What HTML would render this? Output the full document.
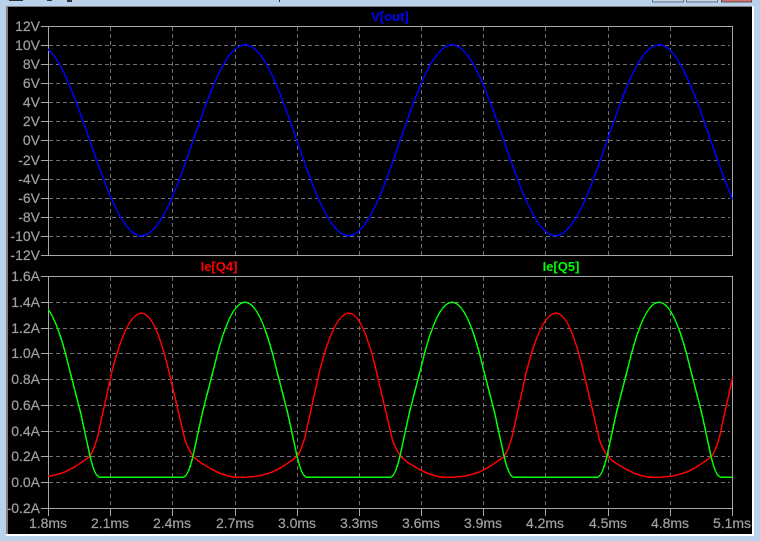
<!DOCTYPE html>
<html>
<head>
<meta charset="utf-8">
<title>V[out]</title>
<style>
html,body{margin:0;padding:0;background:#b9d1ea;width:760px;height:541px;overflow:hidden}
svg{display:block}
text{font-family:"Liberation Sans",Arial,sans-serif;font-size:14px;fill:#a0a0a0;stroke:#a0a0a0;stroke-width:.2px}
.t{font-weight:bold;font-size:13px;stroke:none}
</style>
</head>
<body>
<svg width="760" height="541" viewBox="0 0 760 541" xmlns="http://www.w3.org/2000/svg">
<defs>
<clipPath id="c"><rect x="48" y="20" width="684.5" height="490"/></clipPath>
<path id="gp" d="M-103.5 477.3L-62 477.3Q-57 477.3 -52 456L-42.7 413L-31 367.5Q-15.5 302.3 0 302.3Q15.5 302.3 31 367.5L42.7 413L52 456Q57 477.3 62 477.3L103.5 477.3"/>
<path id="rp" d="M-103.5 477.3L-93 476.3-86 475-77.5 472.3-67.5 467.3-59 461.7-52 456.7Q-47.5 450 -44 437L-30 373.5Q-15 313.2 0 313.2Q13.4 313.2 26.8 369L43.5 440Q47 450 52 456.7L58.5 462.3 68.5 468.3 78.5 473.3 86.8 476 93.5 477.3 103.5 477.3"/>
</defs>

<!-- window background -->
<rect width="760" height="541" fill="#b9d1ea"/>
<!-- title bar remnants -->
<g fill="#333">
<rect x="9" y="0" width="14" height="1"/>
<rect x="47" y="0" width="5" height="1"/>
<rect x="67" y="0" width="5" height="2"/>
<rect x="279" y="0" width="1" height="2"/>
</g>
<g shape-rendering="crispEdges">
<rect x="652.5" y="-3" width="31" height="5" fill="#c5d5e8" stroke="#5f6f85"/>
<rect x="686.5" y="-3" width="31" height="5" fill="#c5d5e8" stroke="#5f6f85"/>
<rect x="721.5" y="-3" width="30" height="5" fill="#d0716a" stroke="#5f4f5f"/>
<!-- frame edges -->
<rect x="752" y="6" width="2" height="530" fill="#ffffff"/>
<rect x="6" y="534" width="748" height="2" fill="#ffffff"/>
<rect x="6" y="6" width="746" height="1" fill="#808080"/>
<rect x="6" y="6" width="2" height="528" fill="#808080"/>
<rect x="8" y="7" width="744" height="527" fill="#000000"/>
</g>

<!-- grid -->
<g stroke="#707070" stroke-width="1" stroke-dasharray="4 3" fill="none" shape-rendering="crispEdges">
<path d="M49 45.5H730M49 64.5H730M49 83.5H730M49 102.5H730M49 121.5H730M49 140.5H730M49 160.5H730M49 179.5H730M49 198.5H730M49 217.5H730M49 236.5H730"/>
<path d="M49 302.5H730M49 328.5H730M49 353.5H730M49 379.5H730M49 405.5H730M49 431.5H730M49 456.5H730M49 482.5H730"/>
<path d="M110.5 27V255M172.5 27V255M235.5 27V255M297.5 27V255M359.5 27V255M421.5 27V255M483.5 27V255M545.5 27V255M608.5 27V255M670.5 27V255"/>
<path d="M110.5 277V508M172.5 277V508M235.5 277V508M297.5 277V508M359.5 277V508M421.5 277V508M483.5 277V508M545.5 277V508M608.5 277V508M670.5 277V508"/>
</g>

<!-- frames and ticks -->
<g stroke="#a8a8a8" stroke-width="1" fill="none" shape-rendering="crispEdges">
<rect x="48.5" y="26.5" width="684" height="229"/>
<rect x="48.5" y="276.5" width="684" height="232"/>
<path d="M41 26.5H48M41 45.5H48M41 64.5H48M41 83.5H48M41 102.5H48M41 121.5H48M41 140.5H48M41 160.5H48M41 179.5H48M41 198.5H48M41 217.5H48M41 236.5H48M41 255.5H48"/>
<path d="M41 276.5H48M41 302.5H48M41 328.5H48M41 353.5H48M41 379.5H48M41 405.5H48M41 431.5H48M41 456.5H48M41 482.5H48M41 508.5H48"/>
<path d="M48.5 509V516M110.5 509V516M172.5 509V516M235.5 509V516M297.5 509V516M359.5 509V516M421.5 509V516M483.5 509V516M545.5 509V516M608.5 509V516M670.5 509V516M732.5 509V516"/>
</g>

<!-- traces -->
<g clip-path="url(#c)" fill="none" stroke-width="1.5" stroke-linejoin="round" shape-rendering="crispEdges">
<path stroke="#0000ff" d="M38 44.8c18.73 0 34.87 46.6 51.75 95.5c16.88 48.9 33.02 95.5 51.75 95.5c18.73 0 34.87 -46.6 51.75 -95.5c16.88 -48.9 33.02 -95.5 51.75 -95.5c18.73 0 34.87 46.6 51.75 95.5c16.88 48.9 33.02 95.5 51.75 95.5c18.73 0 34.87 -46.6 51.75 -95.5c16.88 -48.9 33.02 -95.5 51.75 -95.5c18.73 0 34.87 46.6 51.75 95.5c16.88 48.9 33.02 95.5 51.75 95.5c18.73 0 34.87 -46.6 51.75 -95.5c16.88 -48.9 33.02 -95.5 51.75 -95.5c18.73 0 34.87 46.6 51.75 95.5c16.88 48.9 33.02 95.5 51.75 95.5"/>
<g stroke="#ff0000">
<use href="#rp" transform="translate(141.5 0)"/>
<use href="#rp" transform="translate(349 0)"/>
<use href="#rp" transform="translate(556 0)"/>
<use href="#rp" transform="translate(763.5 0)"/>
</g>
<g stroke="#00ff00">
<use href="#gp" transform="translate(38 0)"/>
<use href="#gp" transform="translate(245 0)"/>
<use href="#gp" transform="translate(452 0)"/>
<use href="#gp" transform="translate(659 0)"/>
</g>
</g>

<!-- titles -->
<text class="t" x="390" y="21" text-anchor="middle" style="fill:#0000ff">V[out]</text>
<text class="t" x="219" y="271" text-anchor="middle" style="fill:#ff0000">Ie[Q4]</text>
<text class="t" x="561" y="271" text-anchor="middle" style="fill:#00ff00">Ie[Q5]</text>

<!-- y labels -->
<g text-anchor="end">
<text x="40" y="31">12V</text>
<text x="40" y="50">10V</text>
<text x="40" y="69">8V</text>
<text x="40" y="88">6V</text>
<text x="40" y="107">4V</text>
<text x="40" y="126">2V</text>
<text x="40" y="145">0V</text>
<text x="40" y="165">-2V</text>
<text x="40" y="184">-4V</text>
<text x="40" y="203">-6V</text>
<text x="40" y="222">-8V</text>
<text x="40" y="241">-10V</text>
<text x="40" y="260">-12V</text>
<text x="40" y="281">1.6A</text>
<text x="40" y="307">1.4A</text>
<text x="40" y="333">1.2A</text>
<text x="40" y="358">1.0A</text>
<text x="40" y="384">0.8A</text>
<text x="40" y="410">0.6A</text>
<text x="40" y="436">0.4A</text>
<text x="40" y="461">0.2A</text>
<text x="40" y="487">0.0A</text>
<text x="40" y="513">-0.2A</text>
</g>

<!-- x labels -->
<g text-anchor="middle">
<text x="48" y="528">1.8ms</text>
<text x="110" y="528">2.1ms</text>
<text x="172" y="528">2.4ms</text>
<text x="235" y="528">2.7ms</text>
<text x="297" y="528">3.0ms</text>
<text x="359" y="528">3.3ms</text>
<text x="421" y="528">3.6ms</text>
<text x="483" y="528">3.9ms</text>
<text x="545" y="528">4.2ms</text>
<text x="608" y="528">4.5ms</text>
<text x="670" y="528">4.8ms</text>
<text x="732" y="528">5.1ms</text>
</g>
</svg>
</body>
</html>
